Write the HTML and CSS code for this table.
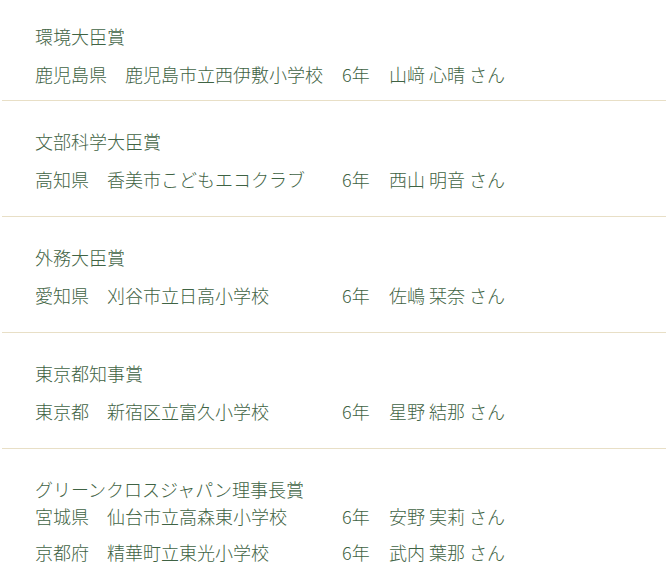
FILE: index.html
```html
<!DOCTYPE html>
<html lang="ja">
<head>
<meta charset="utf-8">
<title>受賞者一覧</title>
<link rel="stylesheet" href="styles.css">
</head>
<body>
<div class="awards">
  <section class="award award--first">
    <h3 class="award-title">環境大臣賞</h3>
    <div class="entry">
      <span class="entry-school">鹿児島県　鹿児島市立西伊敷小学校</span>
      <span class="entry-grade">6年</span>
      <span class="entry-name">山﨑 心晴 さん</span>
    </div>
  </section>
  <section class="award">
    <h3 class="award-title">文部科学大臣賞</h3>
    <div class="entry">
      <span class="entry-school">高知県　香美市こどもエコクラブ</span>
      <span class="entry-grade">6年</span>
      <span class="entry-name">西山 明音 さん</span>
    </div>
  </section>
  <section class="award">
    <h3 class="award-title">外務大臣賞</h3>
    <div class="entry">
      <span class="entry-school">愛知県　刈谷市立日高小学校</span>
      <span class="entry-grade">6年</span>
      <span class="entry-name">佐嶋 栞奈 さん</span>
    </div>
  </section>
  <section class="award">
    <h3 class="award-title">東京都知事賞</h3>
    <div class="entry">
      <span class="entry-school">東京都　新宿区立富久小学校</span>
      <span class="entry-grade">6年</span>
      <span class="entry-name">星野 結那 さん</span>
    </div>
  </section>
  <section class="award award--multi">
    <h3 class="award-title">グリーンクロスジャパン理事長賞</h3>
    <div class="entry">
      <span class="entry-school">宮城県　仙台市立高森東小学校</span>
      <span class="entry-grade">6年</span>
      <span class="entry-name">安野 実莉 さん</span>
    </div>
    <div class="entry">
      <span class="entry-school">京都府　精華町立東光小学校</span>
      <span class="entry-grade">6年</span>
      <span class="entry-name">武内 葉那 さん</span>
    </div>
  </section>
</div>
</body>
</html>
```

FILE: styles.css
```css
html, body {
  margin: 0;
  padding: 0;
  background: #ffffff;
}

body {
  font-family: "Noto Sans CJK JP", "Noto Sans", sans-serif;
  font-weight: 300;
  font-size: 18px;
  color: #3f6344;
}

.awards {
  margin: 0 2px;
}

.award {
  padding: 26px 0 19px 33px;
  border-bottom: 1px solid #e8dfc6;
}

.award--first {
  padding-top: 22px;
  padding-bottom: 8px;
}

.award--multi {
  border-bottom: none;
}

.award-title {
  margin: 0 0 6px;
  font-size: 18px;
  font-weight: 300;
  line-height: 28px;
}

.award--multi .award-title {
  margin-bottom: -5px;
}

.entry {
  display: grid;
  grid-template-columns: 307px 47px auto;
  padding: 4px 0;
  line-height: 28px;
  white-space: nowrap;
}
```
